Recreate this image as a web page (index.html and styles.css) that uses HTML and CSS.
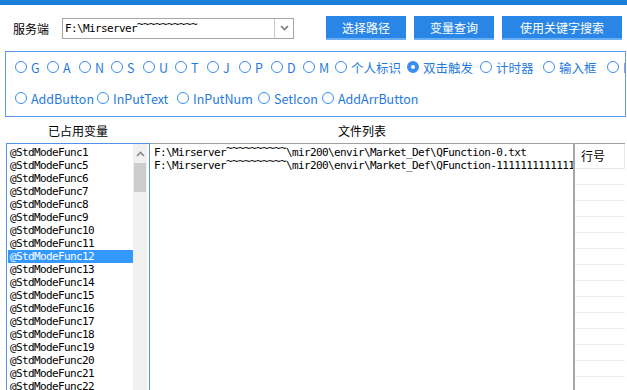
FILE: index.html
```html
<!DOCTYPE html>
<html lang="zh-CN">
<head>
  <meta charset="UTF-8" />
  <title>变量查询</title>
  <link rel="stylesheet" href="styles.css">
</head>
<body>

  <div class="topbar"></div>

  <div class="toolbar">
    <span class="server-label">服务端</span>
    <div class="combo">
      <span class="combo-text mono">F:\Mirserver<span class="tilde">~~~~~~~~~~</span></span>
      <span class="combo-btn">
        <svg width="9" height="6" viewBox="0 0 9 6"><path d="M1 1 L4.5 4.5 L8 1" fill="none" stroke="#7a7a7a" stroke-width="1.6"/></svg>
      </span>
    </div>
    <button class="btn btn-path">选择路径</button>
    <button class="btn btn-var">变量查询</button>
    <button class="btn btn-search">使用关键字搜索</button>
  </div>

  <div class="group">
    <div class="radio-row">
      <label class="opt"><span class="dot"></span>G</label>
      <label class="opt"><span class="dot"></span>A</label>
      <label class="opt"><span class="dot"></span>N</label>
      <label class="opt"><span class="dot"></span>S</label>
      <label class="opt"><span class="dot"></span>U</label>
      <label class="opt"><span class="dot"></span>T</label>
      <label class="opt"><span class="dot"></span>J</label>
      <label class="opt"><span class="dot"></span>P</label>
      <label class="opt"><span class="dot"></span>D</label>
      <label class="opt"><span class="dot"></span>M</label>
      <label class="opt w72"><span class="dot"></span>个人标识</label>
      <label class="opt w73"><span class="dot on"></span>双击触发</label>
      <label class="opt w63"><span class="dot"></span>计时器</label>
      <label class="opt w64"><span class="dot"></span>输入框</label>
      <label class="opt w64"><span class="dot"></span>HTML</label>
    </div>
    <div class="radio-row">
      <label class="opt w82"><span class="dot"></span>AddButton</label>
      <label class="opt w80"><span class="dot"></span>InPutText</label>
      <label class="opt w81"><span class="dot"></span>InPutNum</label>
      <label class="opt w64"><span class="dot"></span>SetIcon</label>
      <label class="opt w100"><span class="dot"></span>AddArrButton</label>
    </div>
  </div>

  <div class="captions">
    <span class="cap-left">已占用变量</span>
    <span>文件列表</span>
  </div>

  <div class="panels">
    <div class="var-list">
      <ul class="items mono">
        <li>@StdModeFunc1</li>
        <li>@StdModeFunc5</li>
        <li>@StdModeFunc6</li>
        <li>@StdModeFunc7</li>
        <li>@StdModeFunc8</li>
        <li>@StdModeFunc9</li>
        <li>@StdModeFunc10</li>
        <li>@StdModeFunc11</li>
        <li class="selected">@StdModeFunc12</li>
        <li>@StdModeFunc13</li>
        <li>@StdModeFunc14</li>
        <li>@StdModeFunc15</li>
        <li>@StdModeFunc16</li>
        <li>@StdModeFunc17</li>
        <li>@StdModeFunc18</li>
        <li>@StdModeFunc19</li>
        <li>@StdModeFunc20</li>
        <li>@StdModeFunc21</li>
        <li>@StdModeFunc22</li>
      </ul>
      <div class="scrollbar">
        <div class="arrow">
          <svg width="9" height="6" viewBox="0 0 9 6"><path d="M1 5 L4.5 1.5 L8 5" fill="none" stroke="#8a8a8a" stroke-width="1.6"/></svg>
        </div>
        <div class="thumb"></div>
      </div>
    </div>

    <div class="file-list mono">
      <div class="line">F:\Mirserver<span class="tilde">~~~~~~~~~~</span>\mir200\envir\Market_Def\QFunction-0.txt</div>
      <div class="line">F:\Mirserver<span class="tilde">~~~~~~~~~~</span>\mir200\envir\Market_Def\QFunction-11111111111111111111.txt</div>
    </div>

    <div class="splitter"></div>

    <div class="line-panel">
      <div class="line-head">行号</div>
      <div class="line-row"></div>
      <div class="line-row"></div>
      <div class="line-row"></div>
      <div class="line-row"></div>
      <div class="line-row"></div>
      <div class="line-row"></div>
      <div class="line-row"></div>
      <div class="line-row"></div>
      <div class="line-row"></div>
      <div class="line-row"></div>
      <div class="line-row"></div>
      <div class="line-row"></div>
      <div class="line-row"></div>
      <div class="line-row"></div>
    </div>
  </div>

</body>
</html>
```

FILE: styles.css
```css
body {
  margin: 0;
  height: 390px;
  overflow: hidden;
  background: #fff;
  color: #000;
  font-family: "Noto Sans CJK SC", "Noto Sans", sans-serif;
  font-size: 12px;
}

.mono {
  font-family: "DejaVu Sans Mono", "Liberation Mono", monospace;
  font-size: 11px;
  letter-spacing: -0.62px;
}

.tilde {
  position: relative;
  top: -4px;
}

.topbar {
  height: 5px;
  background: #1a7fd9;
}

/* top row */
.toolbar {
  display: flex;
  align-items: center;
  height: 24px;
  margin-top: 11px;
  padding-left: 13px;
}

.server-label {
  width: 49px;
  flex: none;
}

.combo {
  display: flex;
  width: 232px;
  height: 21px;
  box-sizing: border-box;
  border: 1px solid #a5a5a5;
  flex: none;
}

.combo-text {
  flex: 1;
  padding-left: 2px;
  line-height: 19px;
  white-space: nowrap;
}

.combo-btn {
  width: 18px;
  border-left: 1px solid #c8c8c8;
  display: flex;
  align-items: center;
  justify-content: center;
}

.btn {
  height: 24px;
  padding: 0;
  border: none;
  border-bottom: 2px solid #6aaef2;
  background: #2a86e6;
  color: #fff;
  font-family: "Noto Sans CJK SC", sans-serif;
  font-size: 12px;
  flex: none;
}

.btn-path { width: 80px; margin-left: 32px; }
.btn-var { width: 80px; margin-left: 8px; }
.btn-search { width: 120px; margin-left: 8px; }

/* radio group */
.group {
  margin: 11px 1px 0 5px;
  height: 66px;
  box-sizing: border-box;
  border: 1px solid #5d9cec;
  padding: 5px 0 0 9px;
  overflow: hidden;
}

.radio-row {
  display: flex;
  height: 20px;
  margin-bottom: 11px;
  white-space: nowrap;
}

.opt {
  display: flex;
  align-items: center;
  gap: 4px;
  width: 32px;
  flex: none;
  color: #1f7ae0;
  font-size: 12.5px;
}

.w63 { width: 63px; }
.w64 { width: 64px; }
.w72 { width: 72px; }
.w73 { width: 73px; }
.w80 { width: 80px; }
.w81 { width: 81px; }
.w82 { width: 82px; }
.w100 { width: 100px; }

.dot {
  width: 12px;
  height: 12px;
  box-sizing: border-box;
  border: 1px solid #3b8df0;
  border-radius: 50%;
  background: #fff;
  flex: none;
}

.dot.on {
  border-width: 4px;
}

/* captions */
.captions {
  display: flex;
  align-items: center;
  height: 26px;
  padding-left: 48px;
}

.cap-left {
  width: 290px;
}

/* bottom panels */
.panels {
  display: flex;
  height: 260px;
  margin-left: 6px;
}

.var-list {
  display: flex;
  width: 144px;
  box-sizing: border-box;
  border: 1px solid #4f95e6;
  flex: none;
}

.items {
  flex: 1;
  list-style: none;
  margin: 0;
  padding: 2px 0 0 1px;
}

.items li {
  height: 13px;
  line-height: 13px;
  padding-left: 2px;
  white-space: nowrap;
}

.items li.selected {
  background: #3399ff;
  color: #fff;
}

.scrollbar {
  width: 14px;
  margin-right: 2px;
  background: #f0f0f0;
}

.arrow {
  height: 19px;
  display: flex;
  align-items: center;
  justify-content: center;
}

.thumb {
  height: 29px;
  margin: 0 1px;
  background: #cdcdcd;
}

.file-list {
  width: 423px;
  box-sizing: border-box;
  border-top: 1px solid #a0a0a0;
  padding: 2px 0 0 4px;
  overflow: hidden;
  flex: none;
}

.line {
  height: 13px;
  line-height: 13px;
  white-space: nowrap;
  overflow: hidden;
}

.splitter {
  width: 2px;
  background: #a6a6ad;
  flex: none;
}

.line-panel {
  width: 50px;
  border-top: 1px solid #a0a0a0;
  flex: none;
}

.line-head {
  height: 24px;
  line-height: 24px;
  padding-left: 6px;
  border-bottom: 1px solid #e4e8ef;
  border-right: 1px solid #e4e8ef;
}

.line-row {
  height: 15px;
  border-bottom: 1px solid #ececec;
}
```
